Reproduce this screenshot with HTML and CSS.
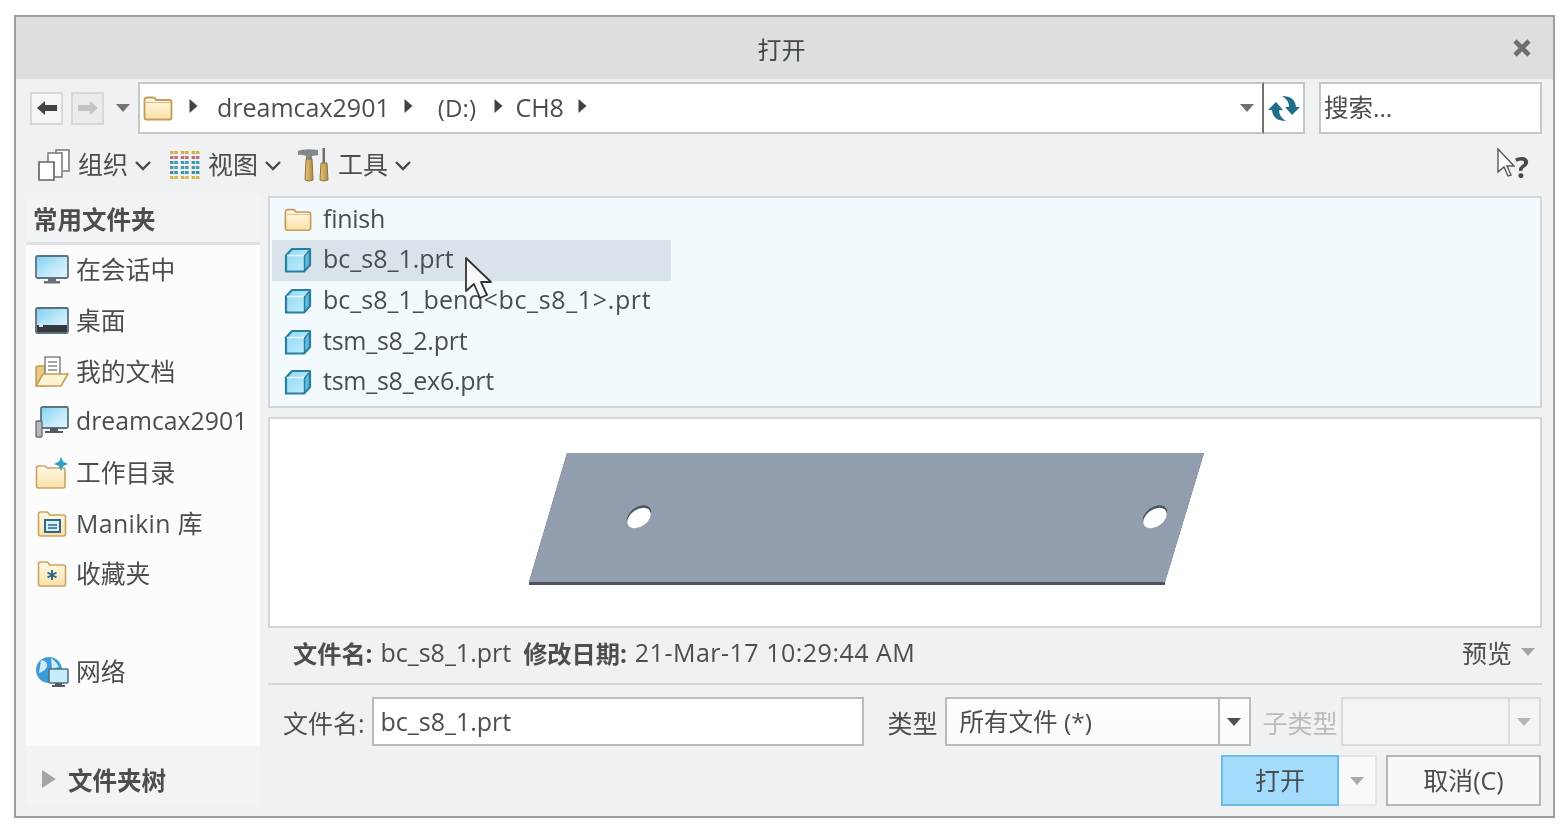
FILE: index.html
```html
<!DOCTYPE html>
<html lang="zh-CN">
<head>
<meta charset="utf-8">
<title>打开</title>
<link rel="stylesheet" href="styles.css">
</head>
<body>
<svg class="defs" width="0" height="0" aria-hidden="true">
  <defs>
    <linearGradient id="gFolder" x1="0" y1="0" x2="0" y2="1"><stop offset="0" stop-color="#fffaea"/><stop offset="1" stop-color="#fbe0a6"/></linearGradient>
    <linearGradient id="gScreen" x1="0" y1="0" x2="1" y2="1"><stop offset="0" stop-color="#7fd0f2"/><stop offset=".6" stop-color="#c4ebfa"/><stop offset="1" stop-color="#e6f6fc"/></linearGradient>
    <linearGradient id="gHandle" x1="0" y1="0" x2="1" y2="0"><stop offset="0" stop-color="#e8c77e"/><stop offset="1" stop-color="#b08a45"/></linearGradient>
    <linearGradient id="gCube" x1="0" y1="0" x2="1" y2="1"><stop offset="0" stop-color="#8fd8f5"/><stop offset="1" stop-color="#c5eefb"/></linearGradient>
    <symbol id="folder" viewBox="0 0 30 26"><path d="M1.500 22.500V5q0-2.500 2.500-2.500h6q2 0 3 2.500h13q2.500 0 2.500 2.500v15q0 2-2 2h-23q-2 0-2-2z" fill="url(#gFolder)" stroke="#c59c58" stroke-width="1.800"/><path d="M2 7.500h26" stroke="#dfbd80" stroke-width="1"/></symbol>
    <symbol id="cube" viewBox="0 0 28 26"><path d="M2 8.500 8 2h18v16l-6 6.500H2z" fill="url(#gCube)" stroke="#2a7f9f" stroke-width="2.200" stroke-linejoin="round"/><path d="M3 8.500h17l5-5.500" fill="none" stroke="#e4f6fc" stroke-width="1.600"/><path d="M20.500 9v15l5-6V3z" fill="#5db9de" stroke="#2a7f9f" stroke-width="1.400" stroke-linejoin="round"/></symbol>
    <symbol id="caret" viewBox="0 0 14 8"><path d="M0 0h14L7 8z"/></symbol>
    <symbol id="tri" viewBox="0 0 8 14"><path d="M0 0v14l8-7z"/></symbol>
    <symbol id="chev" viewBox="0 0 18 11"><path d="M2 2l7 7 7-7" fill="none" stroke="#454a4d" stroke-width="2.400"/></symbol>
  </defs>
</svg>

<div class="window">
  <header class="titlebar">
    <span class="title">打开</span>
    <svg class="close" width="18" height="18" viewBox="0 0 18 18"><path d="M2 2l14 14m0-14L2 16" stroke="#6c7073" stroke-width="4.600"/></svg>
  </header>

  <div class="navrow">
    <button class="navbtn"><svg width="20" height="14" viewBox="0 0 20 14"><path d="M0 7l8-7v4h12v6H8v4z" fill="#3f4345"/></svg></button>
    <button class="navbtn fwd"><svg width="20" height="14" viewBox="0 0 20 14"><path d="M20 7l-8-7v4H0v6h12v4z" fill="#c0c4c7"/></svg></button>
    <svg class="navcaret" width="14" height="8"><use href="#caret" fill="#6f7376"/></svg>
    <div class="address">
      <svg class="addr-folder" width="30" height="26"><use href="#folder"/></svg>
      <svg class="crumb-tri first" width="9" height="14"><use href="#tri" fill="#3f4345"/></svg>
      <span class="crumb">dreamcax2901</span>
      <svg class="crumb-tri" width="9" height="14"><use href="#tri" fill="#3f4345"/></svg>
      <span class="crumb drive">(D:)</span>
      <svg class="crumb-tri" width="9" height="14"><use href="#tri" fill="#3f4345"/></svg>
      <span class="crumb">CH8</span>
      <svg class="crumb-tri" width="9" height="14"><use href="#tri" fill="#3f4345"/></svg>
      <svg class="addr-caret" width="14" height="8"><use href="#caret" fill="#6f7376"/></svg>
    </div>
    <button class="refresh"><svg width="32" height="25" viewBox="0 0 32 25"><path d="M0 14l8-8 7 8h-4q0 7 7 11Q5 25 4 14z" fill="#1f6f8c"/><path d="M32 11l-8 8-7-8h4q0-7-7-11 13 0 14 11z" fill="#1f6f8c"/></svg></button>
    <div class="search">搜索...</div>
  </div>

  <div class="toolbar">
    <svg class="tool-icon org" width="34" height="32" viewBox="0 0 34 32"><path d="M19 9V1h13v21h-6" fill="#fff" stroke="#777" stroke-width="1.500"/><path d="M11 14V4h14v24h-8" fill="#fff" stroke="#777" stroke-width="1.500"/><path d="M2 13h15v18H2z" fill="#fff" stroke="#666" stroke-width="1.700"/></svg>
    <span class="tool-label">组织</span>
    <svg class="chev" width="18" height="11"><use href="#chev"/></svg>
    <svg class="tool-icon view" width="31" height="30" viewBox="0 0 31 30">
      <g fill="none" stroke-width="3.200" stroke-dasharray="3.500 .8 3.500 3">
        <path d="M0 2.500h31" stroke="#d8a94a"/>
        <path d="M0 7.500h31" stroke="#c26f76"/>
        <path d="M0 12.500h31" stroke="#3f96bd"/>
        <path d="M0 17.500h31" stroke="#4c9aa8"/>
        <path d="M0 22.500h31" stroke="#3f8db5"/>
        <path d="M0 27.500h31" stroke="#d9b64c"/>
      </g>
    </svg>
    <span class="tool-label">视图</span>
    <svg class="chev" width="18" height="11"><use href="#chev"/></svg>
    <svg class="tool-icon tools" width="32" height="34" viewBox="0 0 32 34"><path d="M1 3q6-3 20-1v5l-6 1v3H9V8Q4 6 1 7z" fill="#83888b"/><path d="M9 11h6l1 21q-4 2-8 0z" fill="url(#gHandle)" stroke="#8e7236" stroke-width="1"/><path d="M25.500 0h2.500v15h-2.500z" fill="#6d7174"/><path d="M24 15h6l1 17q-4 2-8 0z" fill="url(#gHandle)" stroke="#8e7236" stroke-width="1"/></svg>
    <span class="tool-label">工具</span>
    <svg class="chev" width="18" height="11"><use href="#chev"/></svg>
    <span class="help-q">?</span>
    <svg class="help-cursor" width="18" height="30" viewBox="0 0 18 30"><path d="M1 1v23l6-5 4 9 3-1-4-9h7z" fill="#fff" stroke="#55595c" stroke-width="1.400"/></svg>
  </div>

  <div class="main">
    <aside class="sidebar">
      <div class="side-head">常用文件夹</div>
      <ul class="side-list">
        <li class="side-item">
          <svg width="34" height="30" viewBox="0 0 34 30"><rect x="1" y="1" width="32" height="22" rx="1.500" fill="url(#gScreen)" stroke="#5c7482" stroke-width="1.800"/><path d="M13 23h8v3h-8zM9 26h16v2.500H9z" fill="#6a7075"/></svg>
          <span>在会话中</span>
        </li>
        <li class="side-item">
          <svg width="34" height="28" viewBox="0 0 34 28"><rect x="1" y="1" width="32" height="25" rx="1.500" fill="url(#gScreen)" stroke="#5c6f7c" stroke-width="1.800"/><rect x="2" y="18" width="30" height="7" fill="#33393e"/><rect x="4" y="16" width="4" height="4" fill="#cfe6ef"/></svg>
          <span>桌面</span>
        </li>
        <li class="side-item">
          <svg width="34" height="32" viewBox="0 0 34 32"><path d="M1 29V12q0-2 2-2h7v20H3q-2 0-2-1z" fill="#e9c987" stroke="#c29a55" stroke-width="1.500"/><path d="M10 1h15v18H10z" fill="#fff" stroke="#7f8487" stroke-width="1.500"/><path d="M13 6h9M13 10h9M13 14h9" stroke="#888" stroke-width="1.500"/><path d="M1 30l7-12h25l-7 12z" fill="#fdf2d2" stroke="#c29a55" stroke-width="1.500"/></svg>
          <span>我的文档</span>
        </li>
        <li class="side-item">
          <svg width="34" height="32" viewBox="0 0 34 32"><rect x="6" y="1" width="27" height="21" rx="1.500" fill="url(#gScreen)" stroke="#5c7482" stroke-width="1.800"/><path d="M15 22h8v3h-8zM10 25h18v2H10z" fill="#555b60"/><rect x="1" y="15" width="6" height="16" rx="1" fill="#b6babc" stroke="#666b6e" stroke-width="1.300"/></svg>
          <span>dreamcax2901</span>
        </li>
        <li class="side-item">
          <svg width="34" height="32" viewBox="0 0 34 32"><path d="M1.500 29V11q0-2 2-2h6q1.500 0 2.500 2h16q2 0 2 2v16q0 2-2 2H3.500q-2 0-2-2z" fill="url(#gFolder)" stroke="#c9a25e" stroke-width="1.600"/><path d="M26 0l2 4.500L33 7l-5 2-2 5-2-5-5-2 5-2.500z" fill="#2aa0c8"/></svg>
          <span>工作目录</span>
        </li>
        <li class="side-item man">
          <svg width="30" height="28" viewBox="0 0 30 28"><path d="M1.500 24V4q0-2 2-2h6q2 0 3 3h14q2 0 2 2v17q0 2-2 2h-23q-2 0-2-2z" fill="url(#gFolder)" stroke="#c9a25e" stroke-width="1.600"/><rect x="8" y="10" width="15" height="12" fill="#d9edf5" stroke="#2c6a87" stroke-width="2"/><path d="M11 15h9M11 18h9" stroke="#2c6a87" stroke-width="1.600"/></svg>
          <span class="wide">Manikin 库</span>
        </li>
        <li class="side-item man">
          <svg width="30" height="28" viewBox="0 0 30 28"><path d="M1.500 24V4q0-2 2-2h6q2 0 3 3h14q2 0 2 2v17q0 2-2 2h-23q-2 0-2-2z" fill="url(#gFolder)" stroke="#c9a25e" stroke-width="1.600"/><path d="M15 10v10m-4.500-7.500l9 5m0-5l-9 5" stroke="#2c6a87" stroke-width="2"/></svg>
          <span>收藏夹</span>
        </li>
        <li class="side-item net">
          <svg width="34" height="32" viewBox="0 0 34 32"><circle cx="14" cy="14" r="13" fill="#3d9bd6"/><path d="M6 4q7 1 6 6t-8 7M16 2q5 3 8 9l-7 2z" fill="#cfeaf8"/><rect x="14" y="13" width="19" height="14" rx="1" fill="#c6ecfa" stroke="#4d7486" stroke-width="1.600"/><path d="M20 27h7v2h-7zM17 29h13v2H17z" fill="#555b60"/></svg>
          <span>网络</span>
        </li>
      </ul>
      <div class="side-foot">
        <svg width="14" height="18" viewBox="0 0 14 18"><path d="M0 0v18l14-9z" fill="#a3a6a8"/></svg>
        <span>文件夹树</span>
      </div>
    </aside>

    <section class="content">
      <ul class="filelist">
        <li class="file"><svg width="28" height="25"><use href="#folder"/></svg><span class="tight">finish</span></li>
        <li class="file selected"><svg width="28" height="26"><use href="#cube"/></svg><span>bc_s8_1.prt</span></li>
        <li class="file"><svg width="28" height="26"><use href="#cube"/></svg><span>bc_s8_1_bend<span class="spread">&lt;bc_s8_1&gt;.prt</span></span></li>
        <li class="file"><svg width="28" height="26"><use href="#cube"/></svg><span class="tight">tsm_s8_2.prt</span></li>
        <li class="file"><svg width="28" height="26"><use href="#cube"/></svg><span class="tight">tsm_s8_ex6.prt</span></li>
      </ul>
      <svg class="cursor" width="28" height="44" viewBox="0 0 28 44"><path d="M2 2v33l8-7 6 14 7-3-6-13h10z" fill="#f7f9fa" stroke="#333" stroke-width="1.800" stroke-linejoin="round"/></svg>

      <div class="preview">
        <svg class="model" width="700" height="150" viewBox="0 0 700 150">
          <path d="M11 133 49 4h637l-39 129v3H11z" fill="#4b5462"/>
          <path d="M11 133 49 4h637l-39 129z" fill="#929dad"/>
          <ellipse cx="121" cy="67" rx="9" ry="13.500" transform="rotate(55 121 67)" fill="#4a5462"/>
          <ellipse cx="121" cy="69" rx="8.500" ry="13" transform="rotate(55 121 69)" fill="#fff"/>
          <ellipse cx="637" cy="67" rx="9" ry="13.500" transform="rotate(55 637 67)" fill="#4a5462"/>
          <ellipse cx="637" cy="69" rx="8.500" ry="13" transform="rotate(55 637 69)" fill="#fff"/>
        </svg>
      </div>

      <div class="inforow">
        <b>文件名:</b><span class="info-name">bc_s8_1.prt</span><b>修改日期:</b><span class="info-date">21-Mar-17 10:29:44 AM</span>
        <span class="preview-toggle">预览</span>
        <svg class="preview-caret" width="14" height="8"><use href="#caret" fill="#a3a6a8"/></svg>
      </div>

      <div class="formrow">
        <label class="lab-name">文件名:</label>
        <div class="field name-field">bc_s8_1.prt</div>
        <label class="lab-type">类型</label>
        <div class="field combo type-combo"><span>所有文件 (*)</span><i class="combo-btn"><svg width="14" height="8"><use href="#caret" fill="#4b4f52"/></svg></i></div>
        <label class="lab-sub">子类型</label>
        <div class="field combo sub-combo"><span></span><i class="combo-btn"><svg width="14" height="8"><use href="#caret" fill="#b4b7b9"/></svg></i></div>
      </div>

      <div class="btnrow">
        <button class="btn-open">打开</button>
        <button class="btn-drop"><svg width="14" height="8"><use href="#caret" fill="#a9acae"/></svg></button>
        <button class="btn-cancel">取消(C)</button>
      </div>
    </section>
  </div>
</div>
</body>
</html>
```

FILE: styles.css
```css
* { box-sizing: border-box; }
html, body { margin: 0; padding: 0; background: #fff; }
body {
  padding: 15px 0 0 14px;
  height: 829px;
  overflow: hidden;
  font-family: "Open Sans", "Noto Sans CJK SC", sans-serif;
  font-size: 25px;
  color: #4a4e51;
}
.defs { position: absolute; }
ul { list-style: none; margin: 0; padding: 0; }
button { font: inherit; color: inherit; padding: 0; cursor: default; }
svg { display: block; flex: none; }

.window {
  width: 1541px;
  height: 803px;
  border: 2px solid #9b9d9e;
  background: #eff1f3;
  filter: blur(0.45px);
}

/* title */
.titlebar {
  position: relative;
  height: 62px;
  background: #dcdfe0;
  display: flex;
  align-items: center;
  justify-content: center;
  padding-right: 6px;
}
.title { font-size: 24px; color: #43474a; }
.close { position: absolute; right: 22px; top: 22px; }

/* nav */
.navrow {
  display: flex;
  align-items: center;
  height: 52px;
  margin-top: 3px;
  padding-left: 14px;
}
.navbtn {
  width: 33px;
  height: 33px;
  border: 2px solid #d6d8da;
  background: #f5f6f6;
  display: flex;
  align-items: center;
  justify-content: center;
  margin-right: 8px;
}
.navbtn.fwd { margin-right: 12px; background: #ebeced; }
.navcaret { margin-right: 8px; }
.address {
  display: flex;
  align-items: center;
  width: 1126px;
  height: 52px;
  background: #fff;
  border: 2px solid #c4c7c9;
  border-right: 2px solid #6e7376;
  padding-left: 3px;
}
.addr-folder { margin-right: 16px; }
.crumb-tri { margin: 0 12px 4px 0; }
.crumb-tri.first { margin-right: 19px; }
.crumb { margin-right: 14px; margin-bottom: 2px; }
.crumb.drive { margin-left: 13px; margin-right: 18px; font-size: 24px; letter-spacing: .2px; }
.addr-caret { margin-left: auto; margin-right: 8px; }
.refresh {
  width: 41px;
  height: 52px;
  background: #fff;
  border: 2px solid #c4c7c9;
  border-left: 0;
  display: flex;
  align-items: center;
  justify-content: center;
}
.search {
  width: 223px;
  height: 52px;
  margin-left: 14px;
  background: #fff;
  border: 2px solid #c4c7c9;
  padding-left: 3px;
  line-height: 47px;
  font-size: 24.5px;
}

/* toolbar */
.toolbar {
  position: relative;
  display: flex;
  align-items: center;
  height: 62px;
  padding-left: 21px;
}
.tool-label { font-size: 25px; margin-left: 7px; padding-bottom: 2px; line-height: 1.2; }
.chev { margin-left: 6px; }
.tool-icon.view { margin-left: 18px; }
.tool-icon.tools { margin-left: 15px; margin-right: 2px; }
.help-q { position: absolute; left: 1499px; top: 13px; font-weight: 700; font-size: 29px; color: #45494c; }
.help-cursor { position: absolute; left: 1481px; top: 14px; }

/* main */
.main {
  display: flex;
  margin-left: 10px;
  gap: 8px;
  height: 610px;
}
.sidebar {
  width: 234px;
  height: 610px;
  display: flex;
  flex-direction: column;
}
.side-head {
  height: 49px;
  background: #f2f3f4;
  border-bottom: 3px solid #dfe1e3;
  padding-left: 7px;
  line-height: 48px;
  font-size: 24.5px;
  font-weight: 700;
}
.side-list {
  height: 501px;
  background: #fcfcfd;
}
.side-item {
  display: flex;
  align-items: center;
  height: 50.7px;
  padding-left: 9px;
  font-size: 24.8px;
}
.side-item span { margin: 0 0 4px 7px; white-space: nowrap; }
.side-item .wide { letter-spacing: .4px; }
.side-item.man { padding-left: 11px; }
.side-item.man span { margin-left: 9px; }
.side-item.net { margin-top: 47px; }
.side-foot {
  height: 60px;
  background: #f2f3f4;
  display: flex;
  align-items: center;
  padding: 6px 0 0 16px;
  font-size: 24.5px;
  font-weight: 700;
}
.side-foot span { margin-left: 12px; }

/* content */
.content {
  position: relative;
  width: 1274px;
}
.filelist {
  height: 212px;
  background: #f2fafd;
  border: 2px solid #d3d6d8;
  padding: 1.500px 0 0 2px;
}
.file {
  display: flex;
  align-items: center;
  height: 40.6px;
  width: 399px;
  padding-left: 12px;
  white-space: nowrap;
}
.file > span { margin: 0 0 4px 11px; }
.file .spread { letter-spacing: .65px; }
.file .tight { letter-spacing: -.25px; }
.file.selected { background: #d9e3ea; }
.cursor { position: absolute; left: 196px; top: 60px; }

.preview {
  height: 211px;
  margin-top: 9px;
  background: #fff;
  border: 2px solid #d3d6d8;
  padding: 30px 0 0 248px;
}

.inforow {
  display: flex;
  align-items: center;
  height: 57px;
  border-bottom: 2px solid #d5d8da;
  padding: 0 7px 7px 25px;
  white-space: nowrap;
}
.inforow b { font-weight: 700; font-size: 24.2px; }
.info-name { margin: 0 12px 0 8px; }
.info-date { margin-left: 8px; letter-spacing: .5px; }
.preview-toggle { margin-left: auto; font-size: 25px; }
.preview-caret { margin-left: 9px; }

.formrow {
  display: flex;
  align-items: center;
  height: 49px;
  margin-top: 12px;
}
.formrow label { font-size: 25px; white-space: nowrap; }
.lab-name { margin-left: 15px; }
.field {
  height: 49px;
  background: #fff;
  border: 2px solid #b9bcbe;
  line-height: 45px;
}
.name-field { width: 492px; margin-left: 7px; padding-left: 7px; }
.lab-type { margin-left: 24px; }
.combo { display: flex; font-size: 24.5px; }
.combo span { flex: 1; }
.combo-btn {
  width: 31px;
  border-left: 2px solid #b9bcbe;
  display: flex;
  align-items: center;
  justify-content: center;
}
.type-combo { width: 306px; margin-left: 7px; padding-left: 13px; background: linear-gradient(#fff, #fafafa); }
.lab-sub { margin-left: 12px; color: #b9bcbe; }
.sub-combo { width: 200px; margin-left: 3px; background: #f3f4f5; border-color: #d8dadc; }
.sub-combo .combo-btn { border-color: #d8dadc; }

.btnrow {
  display: flex;
  height: 51px;
  margin-top: 9px;
  padding-left: 953px;
}
.btn-open {
  width: 118px;
  background: #a3dcfd;
  border: 2px solid #6cbde6;
  font-size: 25px;
  padding-bottom: 3px;
}
.btn-drop {
  width: 38px;
  background: #f8f9fa;
  border: 2px solid #e3e5e7;
  border-left: 0;
  display: flex;
  align-items: center;
  justify-content: center;
}
.btn-cancel {
  width: 155px;
  margin-left: 9px;
  background: #f8f8f8;
  border: 2px solid #b3b6b8;
  font-size: 25px;
  padding-bottom: 3px;
}
```
